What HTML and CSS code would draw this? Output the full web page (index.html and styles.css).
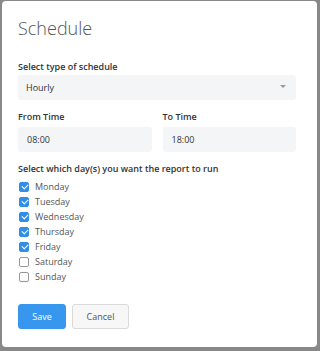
FILE: index.html
```html
<!DOCTYPE html>
<html lang="en">

<head>
  <meta charset="UTF-8" />
  <title>Schedule</title>
  <link rel="stylesheet" href="styles.css">
</head>

<body>
  <div class="dialog">
    <h1 class="title">Schedule</h1>

    <div class="field">
      <label class="label">Select type of schedule</label>
      <div class="select">
        <span>Hourly</span>
        <span class="caret"></span>
      </div>
    </div>

    <div class="row">
      <div class="field">
        <label class="label">From Time</label>
        <div class="input">08:00</div>
      </div>
      <div class="field">
        <label class="label">To Time</label>
        <div class="input">18:00</div>
      </div>
    </div>

    <div class="days">
      <label class="label">Select which day(s) you want the report to run</label>
      <ul class="day-list">
        <li><span class="check on"></span>Monday</li>
        <li><span class="check on"></span>Tuesday</li>
        <li><span class="check on"></span>Wednesday</li>
        <li><span class="check on"></span>Thursday</li>
        <li><span class="check on"></span>Friday</li>
        <li><span class="check"></span>Saturday</li>
        <li><span class="check"></span>Sunday</li>
      </ul>
    </div>

    <div class="actions">
      <button class="btn primary">Save</button>
      <button class="btn">Cancel</button>
    </div>
  </div>
</body>

</html>
```

FILE: styles.css
```css
* {
  box-sizing: border-box;
  margin: 0;
  padding: 0;
  font-family: 'Open Sans', 'Noto Sans', sans-serif;
}

body {
  background-color: #888;
  height: 351px;
  padding: 1px 3px 4px 2px;
}

.dialog {
  background-color: #fff;
  border-radius: 4px;
  height: 100%;
  padding: 15px 21px 0 16px;
  color: #333;
}

.title {
  font-size: 18px;
  font-weight: 300;
  color: #555;
  line-height: 24px;
  margin-bottom: 21px;
}

.label {
  display: block;
  font-size: 9px;
  font-weight: 600;
  line-height: 12px;
  color: #333;
  margin-bottom: 2px;
}

.select,
.input {
  background-color: #f4f5f7;
  border-radius: 3px;
  height: 25px;
  font-size: 9px;
  line-height: 25px;
  padding: 0 9px;
  color: #333;
}

.select {
  display: flex;
  justify-content: space-between;
  align-items: center;
  padding-left: 8px;
}

.caret {
  width: 0;
  height: 0;
  border-left: 3px solid transparent;
  border-right: 3px solid transparent;
  border-top: 3px solid #999;
  margin: -2px 1px 0 0;
}

.row {
  display: grid;
  grid-template-columns: 1fr 1fr;
  gap: 11px;
  margin-top: 11px;
}

.row .label {
  margin-bottom: 4px;
}

.days {
  margin-top: 11px;
}

.days .label {
  margin-bottom: 4px;
}

.day-list {
  list-style: none;
}

.day-list li {
  display: flex;
  align-items: center;
  font-size: 9px;
  line-height: 15px;
  color: #555;
}

.check {
  width: 10px;
  height: 10px;
  border: 1px solid #999;
  border-radius: 2px;
  margin: 0 6px 0 1px;
  position: relative;
}

.check.on {
  background-color: #318ee6;
  border-color: #318ee6;
}

.check.on::after {
  content: "";
  position: absolute;
  left: 2.5px;
  top: 0.5px;
  width: 3px;
  height: 5px;
  border: solid #fff;
  border-width: 0 1.5px 1.5px 0;
  transform: rotate(45deg);
}

.actions {
  display: flex;
  gap: 6px;
  margin-top: 20px;
}

.btn {
  height: 25px;
  width: 57px;
  font-size: 9px;
  border-radius: 3px;
  border: 1px solid #dadada;
  background-color: #f7f7f8;
  color: #555;
  cursor: pointer;
}

.btn.primary {
  width: 48px;
  background-color: #3796ee;
  border-color: #3796ee;
  color: #fff;
}
```
